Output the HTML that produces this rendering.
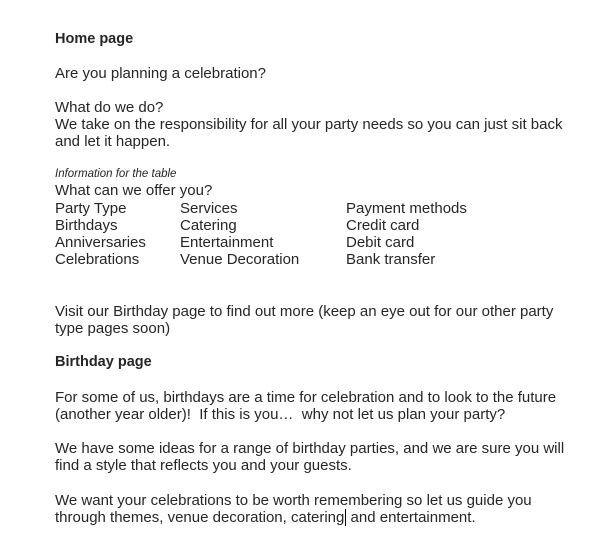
<!DOCTYPE html>
<html><head><style>
body{margin:0;width:616px;height:534px;background:#fff;position:relative;overflow:hidden;font-family:"Liberation Sans",Arial,sans-serif;font-size:15px;color:#262626}
div{position:absolute;white-space:nowrap;line-height:17px}
.b{font-weight:bold;font-size:14.5px}
.i{font-style:italic;font-size:11.5px;line-height:13px}
</style></head><body>
<div class="b" style="left:55px;top:31px">Home page</div>
<div style="left:55px;top:65px">Are you planning a celebration?</div>
<div style="left:55px;top:99px">What do we do?</div>
<div style="left:55px;top:116px">We take on the responsibility for all your party needs so you can just sit back</div>
<div style="left:55px;top:133px">and let it happen.</div>
<div class="i" style="left:55px;top:168px">Information for the table</div>
<div style="left:55px;top:182px">What can we offer you?</div>
<div style="left:55px;top:200px">Party Type</div><div style="left:180px;top:200px">Services</div><div style="left:346px;top:200px">Payment methods</div>
<div style="left:55px;top:217px">Birthdays</div><div style="left:180px;top:217px">Catering</div><div style="left:346px;top:217px">Credit card</div>
<div style="left:55px;top:234px">Anniversaries</div><div style="left:180px;top:234px">Entertainment</div><div style="left:346px;top:234px">Debit card</div>
<div style="left:55px;top:251px">Celebrations</div><div style="left:180px;top:251px">Venue Decoration</div><div style="left:346px;top:251px">Bank transfer</div>
<div style="left:55px;top:303px">Visit our Birthday page to find out more (keep an eye out for our other party</div>
<div style="left:55px;top:320px">type pages soon)</div>
<div class="b" style="left:55px;top:354px">Birthday page</div>
<div style="left:55px;top:389px">For some of us, birthdays are a time for celebration and to look to the future</div>
<div style="left:55px;top:406px">(another year older)!&nbsp; If this is you…&nbsp; why not let us plan your party?</div>
<div style="left:55px;top:440px">We have some ideas for a range of birthday parties, and we are sure you will</div>
<div style="left:55px;top:457px">find a style that reflects you and your guests.</div>
<div style="left:55px;top:492px">We want your celebrations to be worth remembering so let us guide you</div>
<div style="left:55px;top:509px">through themes, venue decoration, catering<span style="border-left:1px solid #000;margin-left:1px"></span> and entertainment.</div>
</body></html>
